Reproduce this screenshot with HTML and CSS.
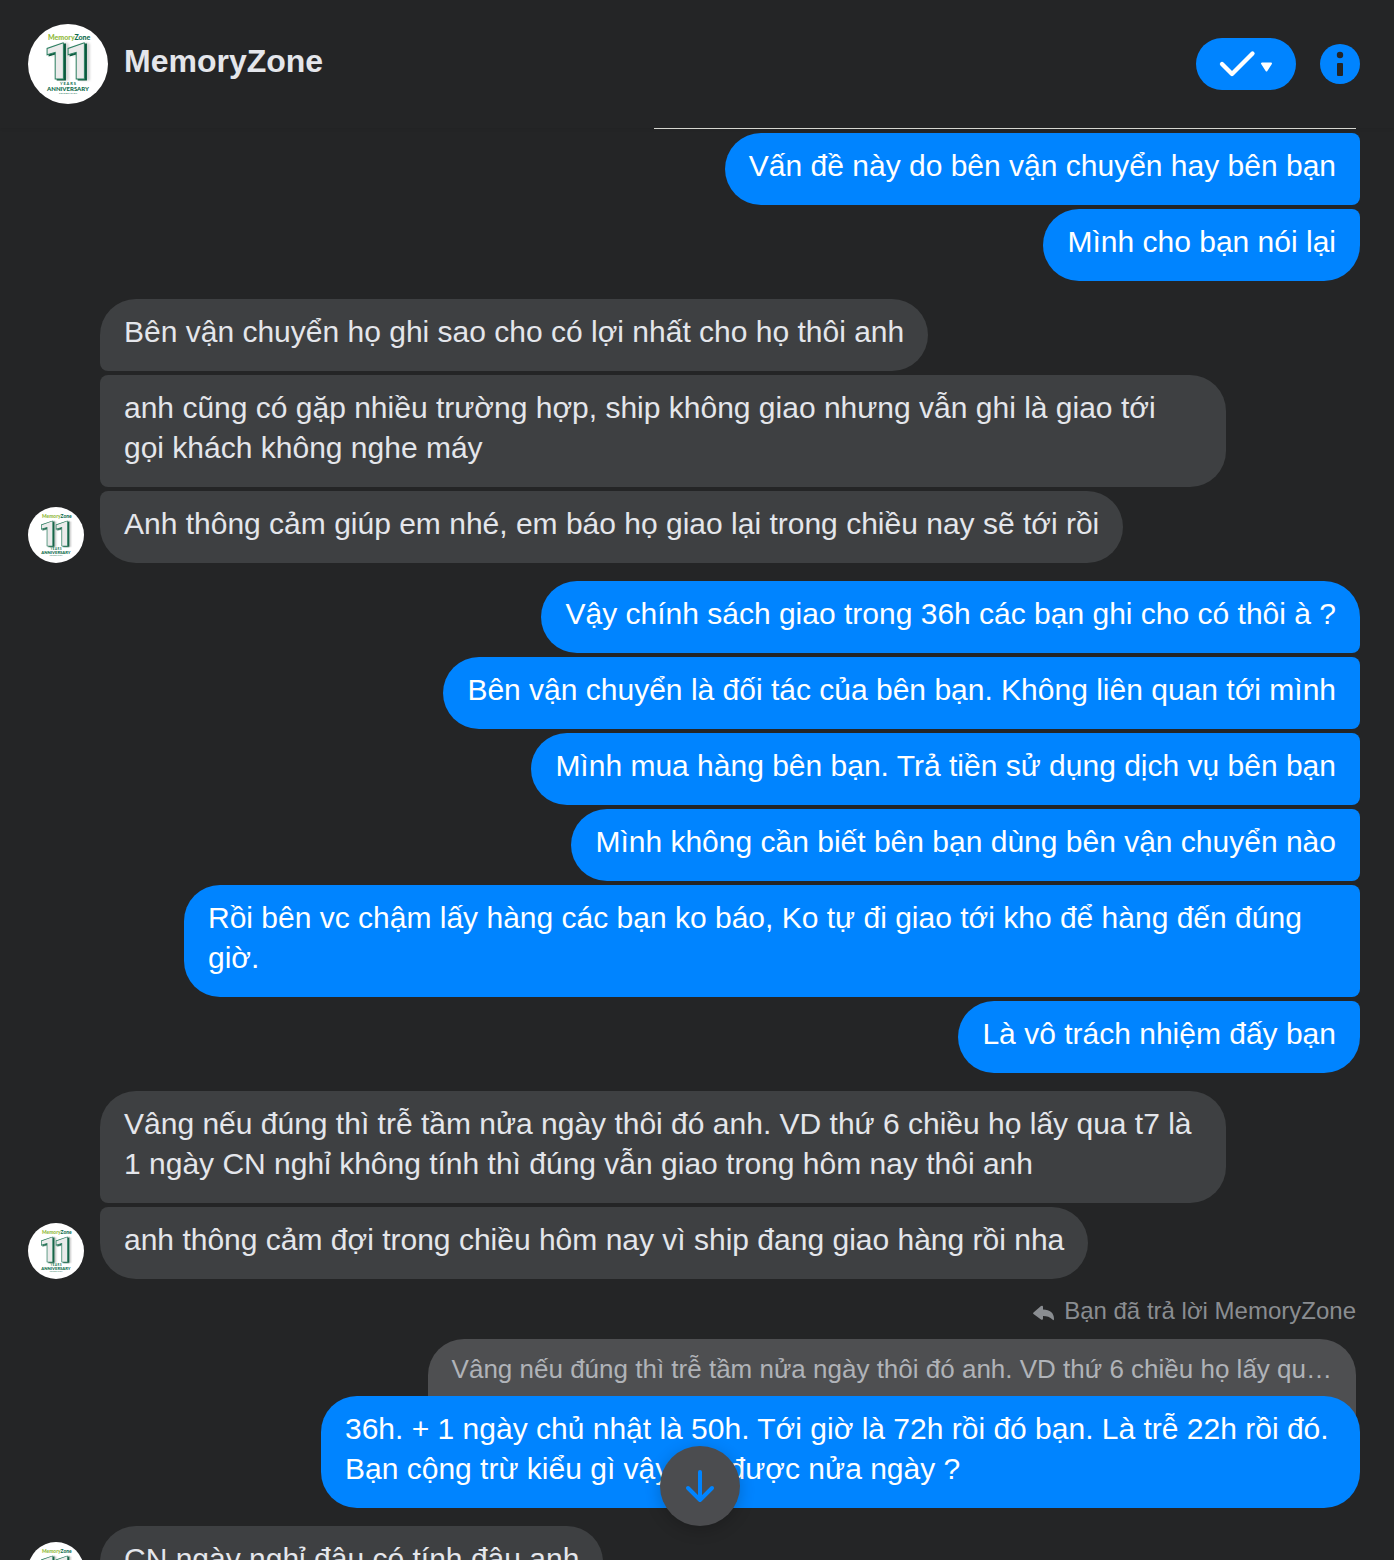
FILE: index.html
```html
<!DOCTYPE html>
<html lang="vi">
<head>
    <meta charset="UTF-8">
    <title>MemoryZone</title>
    <link rel="stylesheet" href="styles.css">
</head>
<body>
    <svg class="defs" width="0" height="0" aria-hidden="true">
        <symbol id="logo" viewBox="0 0 80 80">
            <circle cx="40" cy="40" r="40" fill="#fff"/>
            <text class="logo-name" x="20" y="16" fill="#8fb93c">Memory<tspan fill="#0d6b4b">Zone</tspan></text>
            <text class="logo-num" x="15 36" y="55">11</text>
            <g fill="#0d6b4b" text-anchor="middle">
                <text class="logo-years" x="40" y="61">Y E A R S</text>
                <text class="logo-ann" x="40" y="67">ANNIVERSARY</text>
                <text class="logo-cel" x="40" y="70">C E L E B R A T I O N</text>
            </g>
        </symbol>
    </svg>

    <header class="header">
        <svg class="avatar avatar-big"><use href="#logo"/></svg>
        <h1>MemoryZone</h1>
        <button class="btn-done" aria-label="Xong">
            <svg width="100" height="52" viewBox="0 0 100 52">
                <path d="M26 26 L36 36 L56.500 15.500" fill="none" stroke="#fff" stroke-width="4.300" stroke-linecap="round" stroke-linejoin="round"/>
                <path d="M66 25.500 L75 25.500 L70.500 32.500 Z" fill="#fff" stroke="#fff" stroke-width="2" stroke-linejoin="round"/>
            </svg>
        </button>
        <button class="btn-info" aria-label="Thông tin">
            <svg width="40" height="40" viewBox="0 0 40 40">
                <circle cx="20" cy="20" r="20" fill="#0084ff"/>
                <circle cx="20" cy="11" r="3.200" fill="#242526"/>
                <rect x="17" y="19" width="6" height="13" rx="1" fill="#242526"/>
            </svg>
        </button>
    </header>

    <main class="chat">
        <div class="group me">
            <div class="photo"></div>
            <p class="msg">Vấn đề này do bên vận chuyển hay bên bạn</p>
            <p class="msg last">Mình cho bạn nói lại</p>
        </div>

        <div class="group you">
            <svg class="avatar"><use href="#logo"/></svg>
            <div class="msgs">
                <p class="msg">Bên vận chuyển họ ghi sao cho có lợi nhất cho họ thôi anh</p>
                <p class="msg">anh cũng có gặp nhiều trường hợp, ship không giao nhưng vẫn ghi là giao tới gọi khách không nghe máy</p>
                <p class="msg">Anh thông cảm giúp em nhé, em báo họ giao lại trong chiều nay sẽ tới rồi</p>
            </div>
        </div>

        <div class="group me">
            <p class="msg first">Vậy chính sách giao trong 36h các bạn ghi cho có thôi à ?</p>
            <p class="msg">Bên vận chuyển là đối tác của bên bạn. Không liên quan tới mình</p>
            <p class="msg">Mình mua hàng bên bạn. Trả tiền sử dụng dịch vụ bên bạn</p>
            <p class="msg">Mình không cần biết bên bạn dùng bên vận chuyển nào</p>
            <p class="msg">Rồi bên vc chậm lấy hàng các bạn ko báo, Ko tự đi giao tới kho để hàng đến đúng giờ.</p>
            <p class="msg last">Là vô trách nhiệm đấy bạn</p>
        </div>

        <div class="group you">
            <svg class="avatar"><use href="#logo"/></svg>
            <div class="msgs">
                <p class="msg">Vâng nếu đúng thì trễ tầm nửa ngày thôi đó anh. VD thứ 6 chiều họ lấy qua t7 là 1 ngày CN nghỉ không tính thì đúng vẫn giao trong hôm nay thôi anh</p>
                <p class="msg">anh thông cảm đợi trong chiều hôm nay vì ship đang giao hàng rồi nha</p>
            </div>
        </div>

        <div class="group me reply">
            <div class="reply-label">
                <svg width="24" height="24" viewBox="0 -6 24 24">
                    <path d="M1.500 7.500 L9 1 Q11 0 11 2 V4.500 C18 4.500 22 8 22 14 Q22 16 20.500 14.500 C18 12 15 11 11 11 V13.500 Q11 15.500 9 14.500 L1.500 9 Q0.500 8.200 1.500 7.500 Z" fill="#8a8d91"/>
                </svg>
                <span>Bạn đã trả lời MemoryZone</span>
            </div>
            <p class="quote">Vâng nếu đúng thì trễ tầm nửa ngày thôi đó anh. VD thứ 6 chiều họ lấy qu…</p>
            <p class="msg first last">36h. + 1 ngày chủ nhật là 50h. Tới giờ là 72h rồi đó bạn. Là trễ 22h rồi đó. Bạn cộng trừ kiểu gì vậy mà được nửa ngày ?</p>
        </div>

        <div class="group you">
            <svg class="avatar"><use href="#logo"/></svg>
            <div class="msgs">
                <p class="msg">CN ngày nghỉ đâu có tính đâu anh</p>
            </div>
        </div>
    </main>

    <button class="btn-down" aria-label="Cuộn xuống">
        <svg width="80" height="80" viewBox="0 0 80 80">
            <path d="M40 26 V54 M28 42 L40 54 L52 42" fill="none" stroke="#0084ff" stroke-width="4" stroke-linecap="round" stroke-linejoin="round"/>
        </svg>
    </button>
</body>
</html>
```
FILE: styles.css
```css
* {
    margin: 0;
    padding: 0;
    box-sizing: border-box;
}
body {
    display: flex;
    flex-direction: column;
    height: 100vh;
    overflow: hidden;
    background: #242526;
    color: #e4e6eb;
    font-family: "Liberation Sans", Arial, sans-serif;
    font-size: 30px;
    line-height: 40px;
}
button {
    border: 0;
    background: none;
    cursor: pointer;
}
svg {
    display: block;
    flex-shrink: 0;
}
.defs {
    position: absolute;
}

/* header */
.header {
    display: flex;
    align-items: center;
    flex-shrink: 0;
    height: 128px;
    padding: 0 34px 0 28px;
    box-shadow: 0 0 4px rgba(0,0,0,.1);
}
.header h1 {
    flex: 1;
    padding: 0 16px 6px;
    font-size: 32px;
    line-height: 40px;
}
.btn-done {
    margin-right: 24px;
    border-radius: 26px;
    background: #0084ff;
}
.avatar {
    width: 56px;
    height: 56px;
}
.avatar-big {
    width: 80px;
    height: 80px;
}

/* logo */
.logo-name {
    font: 900 7px Lato, sans-serif;
}
.logo-num {
    font: 900 50px Roboto, sans-serif;
    fill: #ebebeb;
    stroke: #2f8063;
    stroke-width: 1px;
    filter: drop-shadow(2px 1px 0 #0b5a3e) drop-shadow(3px 0 1px #d8d8d8);
}
.logo-years {
    font: bold 4px Lato, sans-serif;
}
.logo-ann {
    font: 900 6px Lato, sans-serif;
}
.logo-cel {
    font: bold 2px Lato, sans-serif;
}

/* messages */
.chat {
    flex: 1;
    min-height: 0;
    overflow: hidden;
    padding: 0 34px 0 28px;
}
.group {
    display: flex;
    margin-bottom: 18px;
}
.me {
    flex-direction: column;
    align-items: flex-end;
    padding-left: 156px;
}
.you {
    align-items: flex-end;
    gap: 16px;
    padding-right: 134px;
}
.msgs {
    display: flex;
    flex-direction: column;
    align-items: flex-start;
}
.msg {
    padding: 13px 24px 19px;
    overflow-wrap: anywhere;
}
.msg + .msg, .photo + .msg {
    margin-top: 4px;
}
.me .msg {
    border-radius: 36px 8px 8px 36px;
    background: #0084ff;
    color: #fff;
}
.me .first {
    border-top-right-radius: 36px;
}
.me .last {
    border-bottom-right-radius: 36px;
}
.you .msg {
    border-radius: 8px 36px 36px 8px;
    background: #3e4042;
}
.you .msg:first-child {
    border-top-left-radius: 36px;
}
.you .msg:last-child {
    border-bottom-left-radius: 36px;
}
.photo {
    width: 100%;
    max-width: 702px;
    height: 1px;
    margin-right: 4px;
    background: #d5d6d0;
}

/* reply */
.reply-label {
    display: flex;
    align-items: center;
    gap: 8px;
    padding: 0 4px 14px 0;
    color: #8a8d91;
    font-size: 24px;
    line-height: 28px;
}
.quote {
    max-width: 100%;
    height: 96px;
    margin-right: 4px;
    padding: 14px 24px;
    overflow: hidden;
    white-space: nowrap;
    text-overflow: ellipsis;
    border-radius: 36px 36px 0 0;
    background: #4e4f51;
    color: #b0b3b8;
    font-size: 26px;
    line-height: 32px;
}
.reply .msg {
    position: relative;
    max-width: 1039px;
    margin-top: -39px;
}

.btn-down {
    position: fixed;
    left: 50%;
    bottom: 34px;
    margin-left: -37px;
    border-radius: 50%;
    background: #4b4c4f;
    box-shadow: 0 4px 16px rgba(0,0,0,.2);
}
```
